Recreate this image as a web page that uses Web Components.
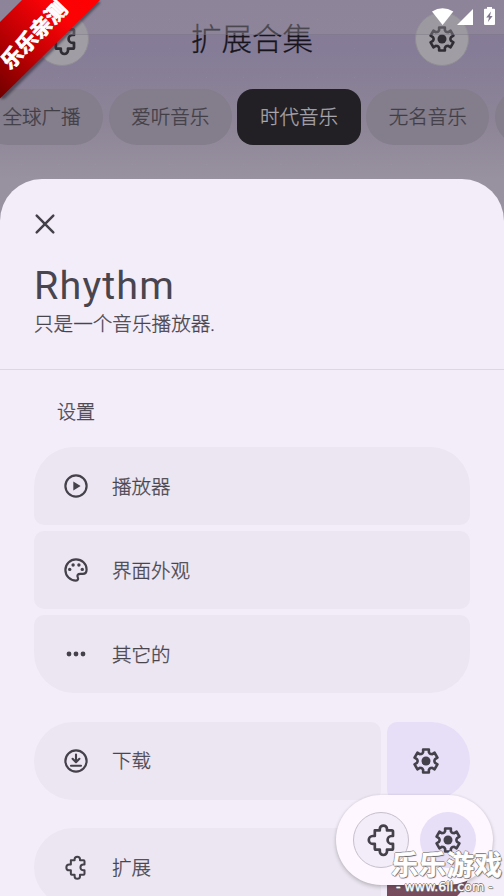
<!DOCTYPE html>
<html lang="zh-CN"><head><meta charset="utf-8"><title>Rhythm</title>
<style>html,body{margin:0;height:896px;overflow:hidden;background:#f3edf9}body{font-family:Roboto,"Noto Sans CJK SC",sans-serif;font-weight:300;-webkit-text-stroke:.3px currentColor;color:#49454f}</style></head>
<body><rhythm-app></rhythm-app>
<script>
const define=(name,html)=>customElements.define(name,class extends HTMLElement{
  connectedCallback(){if(this.shadowRoot)return;
    const t=document.createElement('template');t.innerHTML=typeof html==='function'?html(this):html;
    this.attachShadow({mode:'open'}).append(t.content.cloneNode(true));}
});
const gear=(()=>{const pts=[];
  for(let k=0;k<6;k++){const a=-90+60*k;
    for(const [d,r] of [[-25,8.5],[-18,9.3],[-14,11.9],[14,11.9],[18,9.3],[25,8.5]]){
      const q=(a+d)*Math.PI/180;pts.push((r*Math.cos(q)).toFixed(2)+','+(r*Math.sin(q)).toFixed(2));}}
  return `<polygon points="${pts.join(' ')}" stroke-width="2.6"/><circle r="4.5" fill="currentColor" stroke="none"/>`;})();
const icons={
  gear,
  puzzle:'<path stroke-width="2.7" d="M-6.2-9.6H-1.2V-11a3.6 3.4 0 0 1 7.2 0V-9.6H10.8Q12-9.6 12-8.4V-4H10.5a3.9 3.9 0 0 0 0 7.8H12V8.4Q12 9.6 10.8 9.6H6V11.6a3.6 3.4 0 0 1-7.2 0V9.6H-5Q-6.2 9.6-6.2 8.4V3.8H-8.3a3.9 3.9 0 0 1 0-7.8H-6.2Z"/>',
  play:'<circle r="10.6" stroke-width="2.2"/><path fill="currentColor" stroke="none" d="M-2.7-4.5 4.6 0-2.7 4.5Z"/>',
  palette:'<path stroke-width="2.2" d="M0-10.6C-5.9-10.6-10.6-5.9-10.6 0S-5.9 10.6 0 10.6C2 10.6 2.5 9 1.8 7.4C.8 5.2 1.7 3.9 4.2 3.9H6.8C9.3 3.9 10.6 2.2 10.6-.5C10.6-6.3 5.9-10.6 0-10.6Z"/><g fill="currentColor" stroke="none"><circle cx="-6.3" cy="-.6" r="1.7"/><circle cx="-2.9" cy="-5" r="1.7"/><circle cx="2.9" cy="-5" r="1.7"/><circle cx="6.3" cy="-.6" r="1.7"/></g>',
  more:'<g fill="currentColor" stroke="none"><circle cx="-7" r="2.4"/><circle r="2.4"/><circle cx="7" r="2.4"/></g>',
  download:'<circle r="10.6" stroke-width="2.2"/><path stroke-width="2.1" d="M0-6.5V1M-3.4-2.2 0 1.2 3.4-2.2M-5 4.8H5"/>',
  close:'<path stroke-width="2.5" d="M-8.3-8.3 8.3 8.3M8.3-8.3-8.3 8.3"/>'
};
define('ui-icon',e=>`<style>:host{display:block;flex:none;width:36px;height:36px;color:#45414b}svg{display:block;width:100%;height:100%;fill:none;stroke:currentColor;stroke-linejoin:round;stroke-linecap:round}</style><svg viewBox="-18 -18 36 36">${icons[e.getAttribute('name')]}</svg>`);
define('round-button',`<style>:host{display:flex;box-sizing:border-box;width:54px;height:54px;border-radius:50%;align-items:center;justify-content:center;background:#a09da4;border:1px solid #918d94}::slotted(ui-icon){color:#302d34}</style><slot></slot>`);
define('chip-item',`<style>:host{display:flex;flex:none;box-sizing:border-box;width:123.2px;height:56px;padding-top:2px;border-radius:28px;align-items:center;justify-content:center;background:#847d8b;color:#413e46;font-size:19.5px;line-height:28px;white-space:nowrap}:host([selected]){background:#222025;color:#aaa6ad;border-radius:16px}</style><slot></slot>`);
define('status-bar',`<style>:host{position:absolute;top:0;left:0;right:0;height:34.5px;background:rgba(153,148,157,.4);border-bottom:1px solid rgba(90,84,105,.2);box-sizing:border-box}
svg{position:absolute;left:430px;top:5px}</style>
<svg width="70" height="22" viewBox="430 5 70 22"><path fill="#fff" d="M432 11.5Q442.500 4.800 453.300 11.500L442.600 25Z"/><path fill="#fff" d="M473 9V25H457Z"/><path fill="#fff" d="M487 7h5v1.800h2q1 0 1 1V24q0 1-1 1H485q-1 0-1-1V9.800q0-1 1-1h2Z"/><path fill="#81788f" d="M491 11.500 486.200 17.600h2.800L487.800 22.300 492.600 16h-2.600Z"/></svg>`);
define('corner-ribbon',`<style>:host{position:absolute;left:0;top:0;width:110px;height:110px}svg{display:block}.t{position:absolute;left:-9px;top:20px;width:84px;text-align:center;transform:rotate(-46deg);font:700 21px/28px "Noto Sans CJK SC",sans-serif;color:#fff;-webkit-text-stroke:.8px #fff;white-space:nowrap;}</style>
<svg width="110" height="110"><defs><linearGradient id="g" x1="0" y1="1" x2="1" y2="0"><stop offset="0" stop-color="#710000"/><stop offset=".35" stop-color="#b90003"/><stop offset=".72" stop-color="#fa0307"/><stop offset="1" stop-color="#f00"/></linearGradient><filter id="b"><feGaussianBlur stdDeviation="1.200"/></filter></defs><path d="M24 0H99L99 2L4 97 0 98V22Z" fill="#302b3c" opacity=".6" transform="translate(1 1.500)" filter="url(#b)"/><path d="M22 0H100L0 98.500V22Z" fill="url(#g)"/></svg><div class="t">乐乐亲测</div>`);
define('app-header',`<style>:host{display:flex;flex-direction:column;position:relative;height:225px;background:radial-gradient(circle,#aaa3b328 .7px,transparent 1px) 3px 5px/37px 29px,linear-gradient(#857b97 0,#857c97 50px,#8c8496 115px,#98919f 179px,#98919f);overflow:hidden}
.top{display:grid;grid-template-columns:54px 1fr 54px;align-items:center;padding:11.500px 35px 0 35px;height:54.500px}.title{font-size:30.500px;line-height:44px;text-align:center;color:#17141b;position:relative;top:1px}.chips{display:flex;gap:5.500px;margin:23px 0 0 -20px}</style>
<div class="top"><round-button><ui-icon name="puzzle"></ui-icon></round-button><div class="title">扩展合集</div><round-button><ui-icon name="gear"></ui-icon></round-button></div>
<div class="chips"><chip-item>全球广播</chip-item><chip-item>爱听音乐</chip-item><chip-item selected>时代音乐</chip-item><chip-item>无名音乐</chip-item><chip-item></chip-item></div>
<status-bar></status-bar><corner-ribbon></corner-ribbon>`);
define('setting-row',`<style>:host{display:flex;align-items:center;box-sizing:border-box;height:78px;background:#ebe6f1;border-radius:10px;padding-left:23.500px;gap:18.500px;font-size:19.500px;line-height:28px;flex:1 0 auto}span{padding-top:3px}:host([first]){border-radius:40px 40px 10px 10px}:host([last]){border-radius:10px 10px 40px 40px}:host([start]){border-radius:39px 10px 10px 39px}</style><slot name="icon"></slot><span><slot></slot></span>`);
define('side-action',`<style>:host{display:flex;flex:none;width:83.500px;height:78px;border-radius:10px 39px 39px 10px;background:#e7def8;align-items:center;justify-content:center;padding-right:5px;box-sizing:border-box}:host([danger]){background:linear-gradient(#7b5262,#7b5262 57px,#714353)}</style><slot></slot>`);
define('settings-sheet',`<style>:host{display:block;position:relative;margin-top:-46px;height:717px;background:#f3edf9;border-radius:42px 42px 0 0;overflow:hidden}
header{height:191px;box-sizing:border-box;border-bottom:1px solid #ddd7e4;padding:27px 34px 0}header ui-icon{margin-left:-7.500px}
h1{font:400 39.500px/48px Roboto,sans-serif;-webkit-text-stroke:0;letter-spacing:1.150px;margin:19.500px 0 0;height:49px}p{font-size:19.600px;line-height:28px;margin:0}
h2{font-weight:inherit;font-size:19px;line-height:28px;margin:29px 0 20px 57px}.rows{display:flex;flex-direction:column;gap:6px;padding:0 34px}.split{display:flex;gap:5.500px;margin:22.500px 0 0}</style>
<header><ui-icon name="close"></ui-icon><h1>Rhythm</h1><p>只是一个音乐播放器.</p></header><h2>设置</h2>
<div class="rows"><setting-row first><ui-icon slot="icon" name="play"></ui-icon>播放器</setting-row><setting-row><ui-icon slot="icon" name="palette"></ui-icon>界面外观</setting-row><setting-row last><ui-icon slot="icon" name="more"></ui-icon>其它的</setting-row>
<div class="split"><setting-row start><ui-icon slot="icon" name="download"></ui-icon>下载</setting-row><side-action><ui-icon name="gear"></ui-icon></side-action></div>
<div class="split"><setting-row start><ui-icon slot="icon" name="puzzle" style="width:27px;height:27px;margin:0 4.500px"></ui-icon>扩展</setting-row><side-action danger></side-action></div></div>`);
define('floating-bar',`<style>:host{position:absolute;left:336px;top:795px;width:157px;height:90px;box-sizing:border-box;border-radius:45px;background:#fef7ff;box-shadow:0 2px 4px #0003,0 0 3px #0001;display:flex;align-items:center;gap:11px;padding-left:17px}
.b{display:flex;align-items:center;justify-content:center;width:56px;height:56px;border-radius:50%;box-sizing:border-box;background:#f3edf9;border:1px solid #c6c0cc}.b+.b{background:#e7def8;border:0}</style><div class="b"><ui-icon name="puzzle"></ui-icon></div><div class="b"><ui-icon name="gear"></ui-icon></div>`);
define('site-mark',`<style>:host{position:absolute;left:388px;top:848px;width:120px;height:48px;color:#fff;white-space:nowrap;--o:#6d6a6c;text-shadow:.8px 0 .6px var(--o),-.8px 0 .6px var(--o),0 .8px .6px var(--o),0 -.8px .6px var(--o),1px 1px 1px var(--o)}
.n{font:700 27.500px/31px "Noto Sans CJK SC",sans-serif;padding-left:3px;letter-spacing:.3px;-webkit-text-stroke:.5px #fff}
.u{font:400 12.600px/14px "DejaVu Sans",sans-serif;margin:1px 0 0 8px;width:105px;letter-spacing:0;-webkit-text-stroke:.3px #fff}</style><div class="n">乐乐游戏</div><div class="u">- www.6ll.com -</div>`);
define('rhythm-app',`<style>:host{display:block;position:relative;width:504px;height:896px;overflow:hidden}</style><app-header></app-header><settings-sheet></settings-sheet><floating-bar></floating-bar><site-mark></site-mark>`);
</script></body></html>
